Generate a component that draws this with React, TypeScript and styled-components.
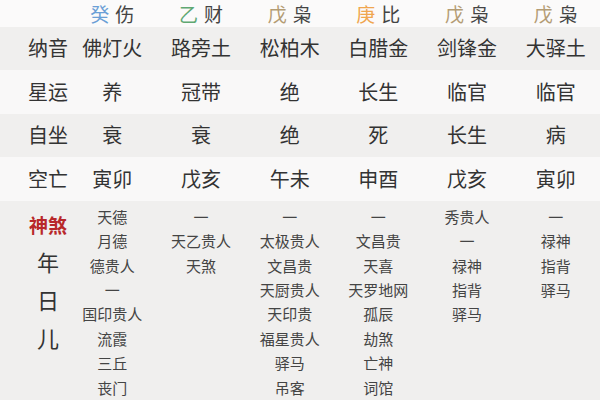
import React from 'react';
import styled, { createGlobalStyle } from 'styled-components';

const GlobalStyle = createGlobalStyle`
    html, body {
        margin: 0;
        padding: 0;
        background: #f9f8f8;
    }
    body {
        font-family: "Noto Sans CJK SC", "Noto Sans", sans-serif;
        color: #333;
    }
`;

type Pillar = {
    stem: string;
    stemColor: string;
    god: string;
    nayin: string;
    xingyun: string;
    zizuo: string;
    kongwang: string;
    shensha: string[];
};

const pillars: Pillar[] = [
    {
        stem: '癸',
        stemColor: '#6b9fd6',
        god: '伤',
        nayin: '佛灯火',
        xingyun: '养',
        zizuo: '衰',
        kongwang: '寅卯',
        shensha: ['天德', '月德', '德贵人', '一', '国印贵人', '流霞', '三丘', '丧门'],
    },
    {
        stem: '乙',
        stemColor: '#5fa872',
        god: '财',
        nayin: '路旁土',
        xingyun: '冠带',
        zizuo: '衰',
        kongwang: '戊亥',
        shensha: ['一', '天乙贵人', '天煞'],
    },
    {
        stem: '戊',
        stemColor: '#b49c74',
        god: '枭',
        nayin: '松柏木',
        xingyun: '绝',
        zizuo: '绝',
        kongwang: '午未',
        shensha: ['一', '太极贵人', '文昌贵', '天厨贵人', '天印贵', '福星贵人', '驿马', '吊客'],
    },
    {
        stem: '庚',
        stemColor: '#f0a650',
        god: '比',
        nayin: '白腊金',
        xingyun: '长生',
        zizuo: '死',
        kongwang: '申酉',
        shensha: ['一', '文昌贵', '天喜', '天罗地网', '孤辰', '劫煞', '亡神', '词馆'],
    },
    {
        stem: '戊',
        stemColor: '#b49c74',
        god: '枭',
        nayin: '剑锋金',
        xingyun: '临官',
        zizuo: '长生',
        kongwang: '戊亥',
        shensha: ['秀贵人', '一', '禄神', '指背', '驿马'],
    },
    {
        stem: '戊',
        stemColor: '#b49c74',
        god: '枭',
        nayin: '大驿土',
        xingyun: '临官',
        zizuo: '病',
        kongwang: '寅卯',
        shensha: ['一', '禄神', '指背', '驿马'],
    },
];

const rows: { label: string; key: 'nayin' | 'xingyun' | 'zizuo' | 'kongwang' }[] = [
    { label: '纳音', key: 'nayin' },
    { label: '星运', key: 'xingyun' },
    { label: '自坐', key: 'zizuo' },
    { label: '空亡', key: 'kongwang' },
];

const Table = styled.div`
    width: 600px;
    height: 400px;
    overflow: hidden;
    display: flex;
    flex-direction: column;
`;

const Row = styled.div<{ $shade?: boolean; $height: number }>`
    display: grid;
    grid-template-columns: 68px repeat(6, 1fr);
    height: ${({ $height }) => $height}px;
    align-items: center;
    background: ${({ $shade }) => ($shade ? '#f0efee' : '#f9f8f8')};
`;

const HeaderRow = styled(Row)`
    background: #fbfafa;
`;

const Label = styled.div`
    padding-left: 28px;
    font-size: 20px;
    line-height: 1;
    color: #333;
    text-align: center;
`;

const Cell = styled.div`
    font-size: 20px;
    line-height: 1;
    color: #333;
    text-align: center;
`;

const HeaderCell = styled.div`
    font-size: 19px;
    line-height: 1;
    text-align: center;
    color: #444;
    padding-top: 1px;
`;

const Stem = styled.span<{ $color: string }>`
    color: ${({ $color }) => $color};
    margin-right: 6px;
`;

const ShenshaSection = styled.div`
    flex: 1;
    display: grid;
    grid-template-columns: 68px repeat(6, 1fr);
    background: #f0efee;
    padding-top: 4px;
`;

const ShenshaLabel = styled.div`
    padding-left: 28px;
    display: flex;
    flex-direction: column;
    align-items: center;
`;

const ShenshaTitle = styled.div`
    font-size: 19px;
    font-weight: 700;
    color: #b8282a;
    line-height: 1;
    margin-top: 10px;
`;

const Pillar = styled.div`
    font-size: 22px;
    line-height: 1;
    color: #333;
    margin-top: 16px;

    & + & {
        margin-top: 16px;
    }
`;

const ShenshaList = styled.div`
    display: flex;
    flex-direction: column;
    align-items: center;
`;

const ShenshaItem = styled.div`
    font-size: 15px;
    line-height: 24.4px;
    color: #444;
`;

export default function App() {
    return (
        <>
            <GlobalStyle />
            <Table>
                <HeaderRow $height={27}>
                    <div />
                    {pillars.map((p, i) => (
                        <HeaderCell key={i}>
                            <Stem $color={p.stemColor}>{p.stem}</Stem>
                            {p.god}
                        </HeaderCell>
                    ))}
                </HeaderRow>
                {rows.map((r, ri) => (
                    <Row key={r.key} $shade={ri % 2 === 0} $height={44}>
                        <Label>{r.label}</Label>
                        {pillars.map((p, i) => (
                            <Cell key={i}>{p[r.key]}</Cell>
                        ))}
                    </Row>
                ))}
                <ShenshaSection>
                    <ShenshaLabel>
                        <ShenshaTitle>神煞</ShenshaTitle>
                        <Pillar>年</Pillar>
                        <Pillar>日</Pillar>
                        <Pillar>儿</Pillar>
                    </ShenshaLabel>
                    {pillars.map((p, i) => (
                        <ShenshaList key={i}>
                            {p.shensha.map((s, si) => (
                                <ShenshaItem key={si}>{s}</ShenshaItem>
                            ))}
                        </ShenshaList>
                    ))}
                </ShenshaSection>
            </Table>
        </>
    );
}
